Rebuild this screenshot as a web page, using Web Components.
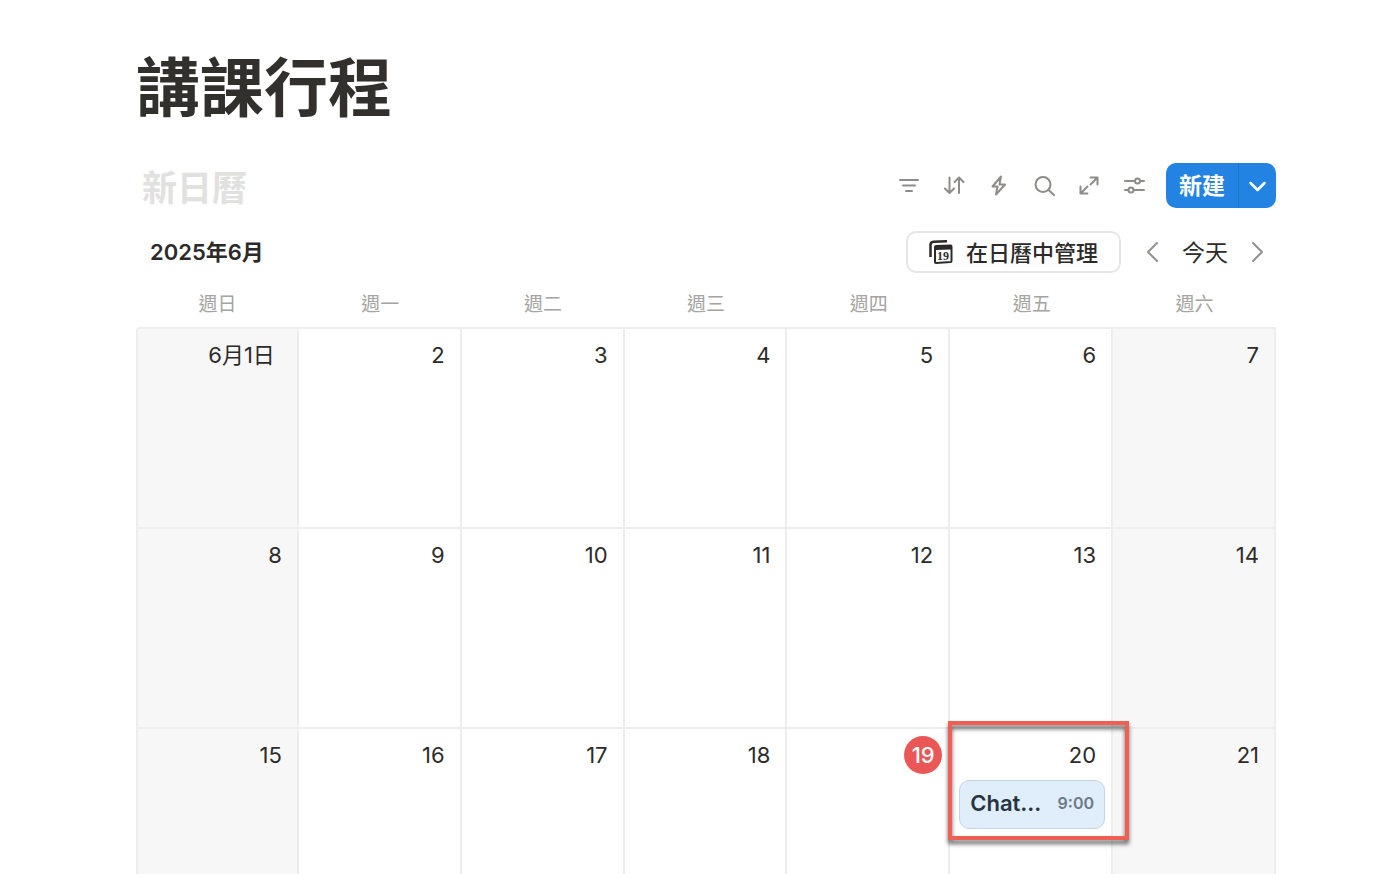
<!DOCTYPE html>
<html lang="zh-Hant">
<head>
<meta charset="utf-8">
<meta name="viewport" content="width=device-width, initial-scale=1">
<title>講課行程</title>
<style>
    body {
        margin: 0;
        height: 100vh;
        overflow: hidden;
        background: #fff;
        color: #32302c;
        font-family: Inter, "Noto Sans CJK TC", sans-serif;
        font-size: 22px;
    }
</style>
</head>
<body>
<schedule-page heading="講課行程">
    <view-toolbar slot="toolbar" placeholder="新日曆"></view-toolbar>
    <month-nav slot="nav" month="2025年6月"></month-nav>
    <month-grid slot="grid" today="19" marked="20">
        <calendar-event slot="day-20" time="9:00">Chat...</calendar-event>
    </month-grid>
</schedule-page>

<script>
const resetButton = `
    button {
        display: flex;
        align-items: center;
        justify-content: center;
        margin: 0;
        padding: 0;
        border: 0;
        background: none;
        color: inherit;
        font: inherit;
        cursor: pointer;
    }
    svg {
        display: block;
        fill: none;
        stroke: currentColor;
        stroke-width: 2;
        stroke-linecap: round;
        stroke-linejoin: round;
    }
`;

class SchedulePage extends HTMLElement {
    constructor() {
        super();
        this.attachShadow({ mode: 'open' });
    }

    connectedCallback() {
        this.shadowRoot.innerHTML = `
            <style>
                :host {
                    display: block;
                    height: 100%;
                    box-sizing: border-box;
                    overflow: hidden;
                    padding: 48px 124px 0 136px;
                }
                h1 {
                    margin: 0 0 35px;
                    font-size: 64px;
                    line-height: 80px;
                    font-weight: 700;
                }
            </style>
            <main>
                <h1>${this.getAttribute('heading')}</h1>
                <slot name="toolbar"></slot>
                <slot name="nav"></slot>
                <slot name="grid"></slot>
            </main>
        `;
    }
}

const toolIcons = {
    '篩選': '<path d="M4 8H22M7 13.500H19M10 19H16"/>',
    '排序': '<path d="M8.500 5.500V21M4 16.500L8.500 21L13 16.500M18 21V5.500M13.500 10L18 5.500L22.500 10"/>',
    '自動化': '<path d="M15 4.500L6.500 14.500H11.500L10 22.500L19 12.500H13.500Z"/>',
    '搜尋': '<circle cx="12" cy="12.500" r="7.500"/><path d="M17.500 18L23 23"/>',
    '展開': '<path d="M14.500 5.500H21.500V12.500M21.500 5.500L14.500 12.500M11.500 21.500H4.500V14.500M4.500 21.500L11.500 14.500"/>',
    '設定': '<path d="M4 9H13.500M19.500 9H23M4 18H7M13 18H23"/><circle cx="16.500" cy="9" r="2.500"/><circle cx="10" cy="18" r="2.500"/>'
};

class ViewToolbar extends HTMLElement {
    constructor() {
        super();
        this.attachShadow({ mode: 'open' });
    }

    connectedCallback() {
        const tools = Object.entries(toolIcons).map(([name, icon]) => `
            <button class="tool" type="button" aria-label="${name}">
                <svg width="26" height="28" viewBox="0 0 26 28">${icon}</svg>
            </button>
        `).join('');

        this.shadowRoot.innerHTML = `
            <style>
                ${resetButton}
                :host {
                    display: flex;
                    align-items: center;
                    justify-content: space-between;
                    height: 45px;
                    padding-left: 6px;
                }
                h2 {
                    margin: 0;
                    padding-top: 4px;
                    color: #e1e1e0;
                    font-size: 35px;
                    line-height: 44px;
                    font-weight: 600;
                }
                .tools, .split {
                    display: flex;
                }
                .tools {
                    align-items: center;
                }
                .tool {
                    width: 45px;
                    height: 45px;
                    color: #8e8c89;
                }
                .split {
                    height: 45px;
                    margin-left: 10px;
                    border-radius: 10px;
                    overflow: hidden;
                    background: #2383e2;
                    color: #fff;
                }
                .new {
                    padding: 0 13px 4px;
                    border-right: 1px solid #1b72c8;
                    font-size: 23px;
                    font-weight: 600;
                }
                .more {
                    width: 37px;
                }
            </style>
            <h2>${this.getAttribute('placeholder')}</h2>
            <div class="tools">
                ${tools}
                <div class="split">
                    <button class="new" type="button">新建</button>
                    <button class="more" type="button" aria-label="更多">
                        <svg width="20" height="14" viewBox="0 0 20 14" style="stroke-width: 2.5"><path d="M2.500 4L9.500 11L16.500 4"/></svg>
                    </button>
                </div>
            </div>
        `;
    }
}

class MonthNav extends HTMLElement {
    constructor() {
        super();
        this.attachShadow({ mode: 'open' });
    }

    connectedCallback() {
        this.shadowRoot.innerHTML = `
            <style>
                ${resetButton}
                :host {
                    display: flex;
                    align-items: center;
                    justify-content: space-between;
                    margin-top: 23px;
                    padding: 0 6px 0 14px;
                    color: #2c2b29;
                }
                h3 {
                    margin: 0;
                    font-size: 22px;
                    line-height: 30px;
                    font-weight: 600;
                }
                .actions {
                    display: flex;
                    align-items: center;
                }
                .manage {
                    box-sizing: border-box;
                    height: 42px;
                    gap: 13px;
                    margin-right: 19px;
                    padding: 0 21px;
                    border: 2px solid #e6e6e5;
                    border-radius: 10px;
                    font-size: 22px;
                    font-weight: 500;
                }
                .manage span {
                    padding-bottom: 3px;
                }
                .manage text {
                    fill: currentColor;
                    stroke: none;
                    font: 700 12px "Liberation Serif", serif;
                }
                .today {
                    padding: 0 17px 3px;
                    font-size: 23px;
                }
                .step {
                    width: 25px;
                    height: 42px;
                    color: #91918e;
                }
            </style>
            <h3>${this.getAttribute('month')}</h3>
            <div class="actions">
                <button class="manage" type="button">
                    <svg width="24" height="24" viewBox="0 0 24 24">
                        <path d="M1.500 17V5Q1.500 2 4.500 1.800L18 1.200" stroke-width="2.500" stroke-linecap="butt"/>
                        <path d="M6 7Q6 6 7 6L21.500 5.500Q22.500 5.500 22.500 6.500V21Q22.500 22 21.500 22.100L7 23Q6 23 6 22Z"/>
                        <path d="M6.500 8L22 7.500" stroke-width="4" stroke-linecap="butt"/>
                        <text x="14" y="19.500" text-anchor="middle">19</text>
                    </svg>
                    <span>在日曆中管理</span>
                </button>
                <button class="step" type="button" aria-label="上個月">
                    <svg width="14" height="22" viewBox="0 0 14 22"><path d="M11 2L2 11L11 20"/></svg>
                </button>
                <button class="today" type="button">今天</button>
                <button class="step" type="button" aria-label="下個月">
                    <svg width="14" height="22" viewBox="0 0 14 22"><path d="M2 2L11 11L2 20"/></svg>
                </button>
            </div>
        `;
    }
}

class MonthGrid extends HTMLElement {
    constructor() {
        super();
        this.attachShadow({ mode: 'open' });
    }

    dayCell(day) {
        const today = day === Number(this.getAttribute('today'));
        const marked = day === Number(this.getAttribute('marked'));
        const label = day === 1 ? '6月1日' : day;
        const kind = today ? 'today' : day === 1 ? 'first' : '';
        return `
            <td>
                <div class="day ${kind}">${label}</div>
                <slot name="day-${day}"></slot>
                ${marked ? '<div class="mark"></div>' : ''}
            </td>
        `;
    }

    connectedCallback() {
        const names = ['週日', '週一', '週二', '週三', '週四', '週五', '週六'];
        const rows = [0, 1, 2].map(week => `
            <tr>${names.map((_, i) => this.dayCell(week * 7 + i + 1)).join('')}</tr>
        `).join('');

        this.shadowRoot.innerHTML = `
            <style>
                :host {
                    display: block;
                    color: #2c2b29;
                }
                table {
                    width: 100%;
                    table-layout: fixed;
                    border-spacing: 0;
                }
                th {
                    height: 54px;
                    padding: 4px 0 0;
                    box-sizing: border-box;
                    color: #a5a4a1;
                    font-size: 19px;
                    font-weight: 400;
                }
                td {
                    position: relative;
                    box-sizing: border-box;
                    height: 200px;
                    padding: 0;
                    border-top: 2px solid #ededec;
                    border-right: 2px solid #ededec;
                    vertical-align: top;
                }
                td:first-child {
                    border-left: 2px solid #ededec;
                }
                td:first-child, td:last-child {
                    background: #f7f7f7;
                }
                tbody tr:first-child td:first-child {
                    border-top-left-radius: 4px;
                }
                .day {
                    height: 38px;
                    margin: 7px 15px 6px 0;
                    line-height: 38px;
                    text-align: right;
                }
                .first {
                    margin-right: 22px;
                }
                .today {
                    width: 38px;
                    margin-left: auto;
                    margin-right: 6px;
                    border-radius: 50%;
                    background: #eb5757;
                    color: #fff;
                    text-align: center;
                    font-weight: 500;
                }
                .mark {
                    position: absolute;
                    z-index: 1;
                    box-sizing: border-box;
                    top: -8px;
                    left: -2px;
                    right: -18px;
                    height: 119px;
                    border: 4px solid #f05f53;
                    filter: drop-shadow(0 4px 2px rgba(0, 0, 0, 0.6));
                    pointer-events: none;
                }
            </style>
            <table>
                <thead>
                    <tr>${names.map(name => `<th scope="col">${name}</th>`).join('')}</tr>
                </thead>
                <tbody>${rows}</tbody>
            </table>
        `;
    }
}

class CalendarEvent extends HTMLElement {
    constructor() {
        super();
        this.attachShadow({ mode: 'open' });
    }

    connectedCallback() {
        this.shadowRoot.innerHTML = `
            <style>
                :host {
                    display: flex;
                    align-items: center;
                    justify-content: space-between;
                    box-sizing: border-box;
                    height: 49px;
                    margin: 0 6px 0 9px;
                    padding: 0 10px 4px;
                    border: 1px solid #c5d5e4;
                    border-radius: 10px;
                    background: #e0edfb;
                    color: #27343f;
                    font-weight: 600;
                    white-space: nowrap;
                }
                time {
                    color: #6c7a87;
                    font-size: 16px;
                    font-weight: 600;
                }
            </style>
            <span><slot></slot></span>
            <time>${this.getAttribute('time')}</time>
        `;
    }
}

customElements.define('schedule-page', SchedulePage);
customElements.define('view-toolbar', ViewToolbar);
customElements.define('month-nav', MonthNav);
customElements.define('month-grid', MonthGrid);
customElements.define('calendar-event', CalendarEvent);
</script>
</body>
</html>
